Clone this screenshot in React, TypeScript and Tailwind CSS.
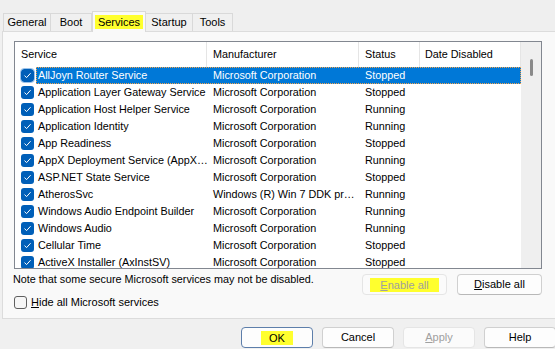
import React from "react";

const rows: [string, string, string][] = [
  ["AllJoyn Router Service", "Microsoft Corporation", "Stopped"],
  ["Application Layer Gateway Service", "Microsoft Corporation", "Stopped"],
  ["Application Host Helper Service", "Microsoft Corporation", "Running"],
  ["Application Identity", "Microsoft Corporation", "Running"],
  ["App Readiness", "Microsoft Corporation", "Stopped"],
  ["AppX Deployment Service (AppX…", "Microsoft Corporation", "Running"],
  ["ASP.NET State Service", "Microsoft Corporation", "Stopped"],
  ["AtherosSvc", "Windows (R) Win 7 DDK pr…", "Running"],
  ["Windows Audio Endpoint Builder", "Microsoft Corporation", "Running"],
  ["Windows Audio", "Microsoft Corporation", "Running"],
  ["Cellular Time", "Microsoft Corporation", "Stopped"],
  ["ActiveX Installer (AxInstSV)", "Microsoft Corporation", "Stopped"],
];

function Check({ selected }: { selected?: boolean }) {
  return (
    <div
      className={
        "w-[13px] h-[13px] rounded-[3px] bg-[#005fb8] flex items-center justify-center " +
        (selected ? "outline outline-1 outline-[#9cc3ea]" : "")
      }
    >
      <svg width="9" height="9" viewBox="0 0 9 9">
        <path d="M1.5 4.6 L3.6 6.6 L7.6 2.2" fill="none" stroke="#ffffff" strokeWidth="1" />
      </svg>
    </div>
  );
}

function Btn({
  children,
  disabled,
  focused,
  width = "w-[72px]",
}: {
  children: React.ReactNode;
  disabled?: boolean;
  focused?: boolean;
  width?: string;
}) {
  return (
    <div
      className={
        width +
        " h-[21px] shrink-0 rounded-[4px] border flex items-center justify-center text-[11px] " +
        (disabled
          ? "bg-[#fbfbfb] border-[#e5e5e5] text-[#a0a0a0]"
          : focused
          ? "bg-[#fdfdfd] border-[#5d7eaa] text-black"
          : "bg-[#fdfdfd] border-[#d0d0d0] border-b-[#b8b8b8] text-black")
      }
    >
      {children}
    </div>
  );
}

export default function App() {
  return (
    <div
      className="w-[555px] h-[349px] bg-[#f0f0f0] overflow-hidden flex flex-col text-black"
      style={{ fontFamily: '"Liberation Sans", Arial, sans-serif' }}
    >
      {/* tabs */}
      <div className="h-[31px] flex items-end pl-[3px] text-[11px] bg-[#efefef]">
        <div className="w-[48px] h-[18px] border border-b-0 border-[#d9d9d9] bg-[#f0f0f0] flex items-center justify-center">
          General
        </div>
        <div className="w-[41px] h-[18px] border border-b-0 border-l-0 border-[#d9d9d9] bg-[#f0f0f0] flex items-center justify-center">
          Boot
        </div>
        <div className="w-[54px] h-[21px] border border-b-0 border-[#d9d9d9] bg-[#f9f9f9] flex items-center justify-center mb-[-1px] relative z-10">
          <span className="bg-[#ffff2e] px-[3px] leading-[14px]">Services</span>
        </div>
        <div className="w-[47px] h-[18px] border border-b-0 border-l-0 border-[#d9d9d9] bg-[#f0f0f0] flex items-center justify-center">
          Startup
        </div>
        <div className="w-[40px] h-[18px] border border-b-0 border-l-0 border-[#d9d9d9] bg-[#f0f0f0] flex items-center justify-center">
          Tools
        </div>
      </div>

      {/* panel */}
      <div className="ml-[2px] w-[560px] h-[288px] shrink-0 bg-[#f9f9f9] border border-[#dcdcdc] flex flex-col">
        <div className="ml-[11px] mt-[9px] w-[528px] h-[228px] border border-[#828790] bg-white flex text-[10.8px]">
          <div className="w-[506px] flex flex-col overflow-hidden">
            {/* header */}
            <div className="h-[25px] shrink-0 flex">
              <div className="w-[192px] border-r border-[#e5e5e5] pl-[6px] flex items-center">Service</div>
              <div className="w-[152px] border-r border-[#e5e5e5] pl-[6px] flex items-center">Manufacturer</div>
              <div className="w-[61px] border-r border-[#e5e5e5] pl-[6px] flex items-center">Status</div>
              <div className="w-[101px] border-r border-[#e5e5e5] pl-[5px] flex items-center">Date Disabled</div>
            </div>
            {rows.map(([s, m, st], i) => {
              const sel = i === 0;
              return (
                <div key={i} className="h-[17px] shrink-0 flex">
                  <div className="w-[21px] shrink-0 pl-[6px] flex items-center">
                    <Check selected={sel} />
                  </div>
                  <div
                    className={
                      "flex flex-1 items-center " +
                      (sel ? "bg-[#0078d7] text-white border border-dotted border-[#f3a44d]" : "border border-transparent")
                    }
                  >
                    <div className="w-[170px] pl-[1px] whitespace-nowrap overflow-hidden">{s}</div>
                    <div className="w-[152px] pl-[6px] whitespace-nowrap overflow-hidden">{m}</div>
                    <div className="w-[61px] pl-[6px] whitespace-nowrap">{st}</div>
                    <div className="flex-1" />
                  </div>
                </div>
              );
            })}
          </div>
          <div className="w-[20px] bg-[#efefef] flex justify-center pt-[17px]">
            <div className="w-[3px] h-[17px] rounded-full bg-[#8a8a8a]" />
          </div>
        </div>

        {/* below list */}
        <div className="flex">
          <div className="w-[359px] shrink-0 pl-[10px] flex flex-col">
            <div className="text-[10.8px] leading-[16px] mt-[2px] whitespace-nowrap">
              Note that some secure Microsoft services may not be disabled.
            </div>
            <div className="flex items-center mt-[7px]">
              <div className="w-[13px] h-[13px] rounded-[3px] border border-[#5f5f5f] bg-[#f6f6f6] ml-[1px]" />
              <span className="text-[11px] ml-[4px]">
                <span className="underline">H</span>ide all Microsoft services
              </span>
            </div>
          </div>
          <div className="flex mt-[5px] gap-[10px]">
            <Btn disabled width="w-[85px]">
              <span className="bg-[#ffff2e] px-[10px] leading-[14px]">
                <span className="underline">E</span>nable all
              </span>
            </Btn>
            <Btn width="w-[85px]">
              <span>
                <span className="underline">D</span>isable all
              </span>
            </Btn>
          </div>
        </div>
      </div>

      {/* bottom buttons */}
      <div className="flex pl-[241px] mt-[8px] gap-[9px]">
        <Btn focused>
          <span className="bg-[#ffff2e] px-[8px] leading-[14px]">OK</span>
        </Btn>
        <Btn>Cancel</Btn>
        <Btn disabled>
          <span>
            <span className="underline">A</span>pply
          </span>
        </Btn>
        <Btn>Help</Btn>
      </div>
    </div>
  );
}
